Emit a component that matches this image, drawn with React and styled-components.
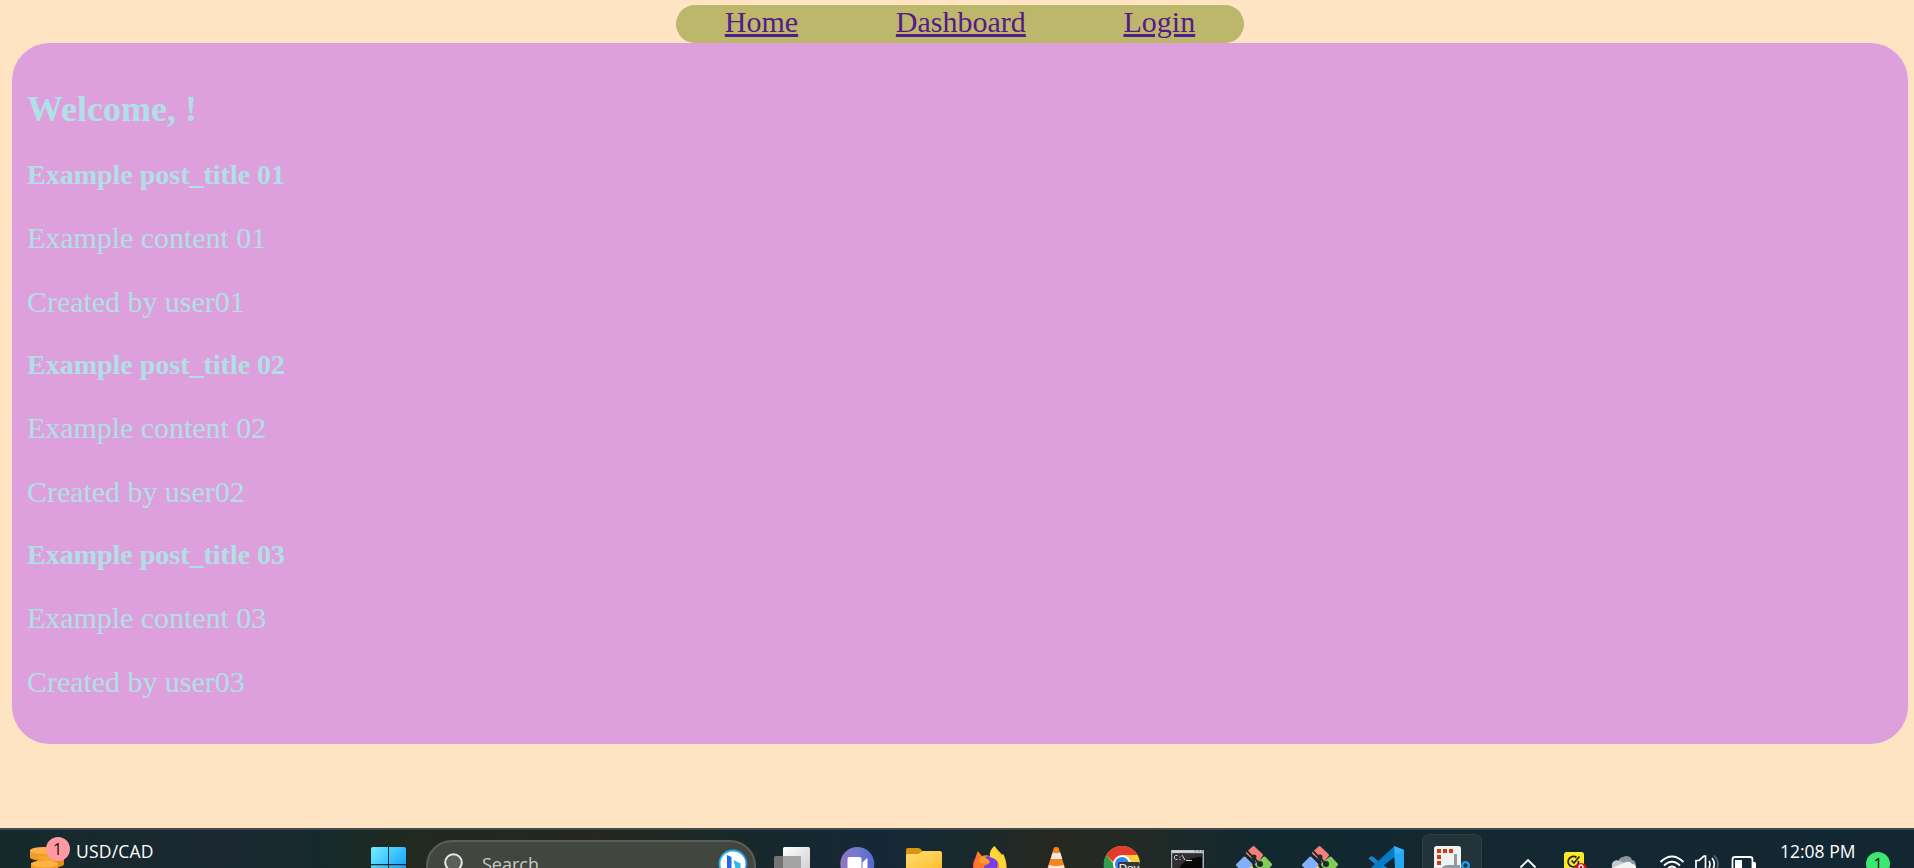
import React from 'react';
import styled, { createGlobalStyle } from 'styled-components';

const GlobalStyle = createGlobalStyle`
  * { box-sizing: border-box; }
  body {
    margin: 0;
    background: #ffe4c4;
    font-family: 'Liberation Serif', 'Times New Roman', serif;
    font-size: 30px;
  }
`;

const Screen = styled.div`
  display: flex;
  flex-direction: column;
  height: 868px;
  overflow: hidden;
`;

const Page = styled.div`
  flex: 1;
  padding: 5px 6px 0 12px;
`;

const Nav = styled.nav`
  display: flex;
  justify-content: space-around;
  width: 568px;
  height: 38px;
  margin: 0 auto;
  border-radius: 19px;
  background: #bdb76b;
`;

const NavLink = styled.a`
  color: #551a8b;
  line-height: 34px;
  text-decoration: underline;
  text-decoration-thickness: 3px;
  text-underline-offset: 2px;
`;

const Panel = styled.main`
  display: flow-root;
  height: 701px;
  padding: 15px;
  border-radius: 37.5px;
  background: #dda0dd;
  color: #b0e0e6;
`;

const Welcome = styled.h2`
  margin: 30.88px 0 28.88px;
  font-size: 36px;
  line-height: 41px;
`;

const PostTitle = styled.h3`
  margin: 28.08px 0;
  font-size: 28.08px;
  letter-spacing: -0.04px;
  line-height: 32px;
`;

const PostText = styled.p`
  margin: 30px 0;
  letter-spacing: -0.04px;
  line-height: 34px;
`;

const Taskbar = styled.footer`
  display: flex;
  flex: none;
  align-items: flex-start;
  height: 40px;
  overflow: hidden;
  border-top: 2px solid #3d4b50;
  background: linear-gradient(
    90deg,
    #152a2b 0, #1b2832 220px, #162a2c 320px, #22291f 410px, #26271f 600px,
    #18292a 740px, #142838 880px, #1a2a2a 980px, #262820 1050px, #222a26 1140px,
    #12282f 1260px, #132831 1500px, #132733 1914px
  );
  color: #fff;
  font-family: 'Open Sans', 'Noto Sans', sans-serif;
  font-size: 17.5px;
`;

const Widget = styled.div`
  display: flex;
  width: 328px;
  margin-left: 28px;
`;

const IconWithBadge = styled.div`
  position: relative;
  width: 48px;
  height: 38px;
`;

const Count = styled.span`
  display: block;
  width: 24px;
  height: 24px;
  border-radius: 50%;
  background: ${(p) => p.$color};
  color: #141414;
  font-size: 16px;
  line-height: 24px;
  text-align: center;
`;

const WidgetCount = styled(Count)`
  position: absolute;
  top: 7px;
  left: 17.5px;
`;

const Label = styled.span`
  margin-top: 9px;
  line-height: 24px;
  white-space: nowrap;
  letter-spacing: ${(p) => p.$spacing || '0'};
`;

const Icon = styled.svg`
  display: block;
  flex: none;
  width: ${(p) => p.$width}px;
  height: 38px;
`;

const SearchBox = styled.div`
  display: flex;
  flex: none;
  justify-content: space-between;
  width: 330px;
  height: 52px;
  margin: 10px 3px 0 4px;
  padding: 0 6px 0 16px;
  border: 2px solid #59605a;
  border-radius: 26px;
  background: #41463f;
`;

const SearchText = styled.span`
  flex: 1;
  margin: 10px 0 0 16px;
  color: #c9cbc8;
  font-size: 18px;
  line-height: 24px;
`;

const Apps = styled.div`
  display: flex;
  flex: none;
`;

const Tray = styled.div`
  display: flex;
  flex: 1;
  align-items: flex-start;
`;

const Clock = styled(Label)`
  width: 86px;
  margin-left: 16px;
`;

const TrayCount = styled(Count)`
  margin-top: 22px;
`;

const AppIcon = ({ children }) => (
  <Icon $width={66} viewBox="0 0 66 38">{children}</Icon>
);

const Coins = () => (
  <Icon $width={48} viewBox="0 0 48 38">
    <g fill="#f39a20">
      <path d="M2 20v7c0 5 27 5 27 0v-7z" />
      <path d="M9 27v7c0 5 27 5 27 0v-7z" fill="#e98d18" />
      <path d="M3 33v9h27v-9z" />
    </g>
    <ellipse cx="15.500" cy="20.500" rx="13.500" ry="3.500" fill="#ffb347" />
    <ellipse cx="22" cy="28" rx="13" ry="3" fill="#f9a332" />
    <ellipse cx="16.500" cy="34" rx="13.500" ry="3.500" fill="#ffb341" />
  </Icon>
);

const Windows = () => (
  <AppIcon>
    <defs>
      <linearGradient id="win" gradientUnits="userSpaceOnUse" x1="15" y1="17" x2="50" y2="52">
        <stop offset="0" stopColor="#75f1ff" />
        <stop offset=".5" stopColor="#35bdff" />
        <stop offset="1" stopColor="#0a86e8" />
      </linearGradient>
    </defs>
    <g fill="url(#win)">
      <path d="M15 19q0-2 2-2h15v17H15zM33 17h15q2 0 2 2v15H33zM15 35.200h17v4H15zM33 35.200h17v4H33z" />
    </g>
  </AppIcon>
);

const Magnifier = () => (
  <Icon $width={22} viewBox="0 0 22 38">
    <circle cx="9.500" cy="20.500" r="8.300" fill="#5a5f5a" stroke="#e8eae8" strokeWidth="2" />
    <path d="m15.500 27 6 6" stroke="#e8eae8" strokeWidth="2" />
  </Icon>
);

const Bing = () => (
  <Icon $width={30} viewBox="0 0 30 38">
    <defs>
      <linearGradient id="bingRing" x1="0" y1="0" x2="1" y2="1">
        <stop offset="0" stopColor="#22c5f4" />
        <stop offset="1" stopColor="#2276e8" />
      </linearGradient>
    </defs>
    <circle cx="15" cy="22" r="13.500" fill="#fff" stroke="url(#bingRing)" strokeWidth="1.800" />
    <path d="m9 13 4.500 2v17L9 29z" fill="#2468e8" />
    <path d="m15.500 18 7 3.500v6l-7 4-3-1 5-4z" fill="#2bbde6" />
  </Icon>
);

const TaskView = () => (
  <AppIcon>
    <defs>
      <linearGradient id="pane" x1="0" y1="0" x2="1" y2="1">
        <stop offset="0" stopColor="#fff" />
        <stop offset="1" stopColor="#ccc" />
      </linearGradient>
    </defs>
    <rect x="24" y="17" width="27" height="27" rx="1.500" fill="url(#pane)" />
    <rect x="15" y="26" width="27" height="27" rx="1.500" fill="#747474" />
    <path d="M24 26h16.500q1.500 0 1.500 1.500V40H24z" fill="#a4a4a4" />
  </AppIcon>
);

const Chat = () => (
  <AppIcon>
    <defs>
      <linearGradient id="chat" x1="0" y1="0" x2="1" y2="0">
        <stop offset="0" stopColor="#9175c0" />
        <stop offset=".5" stopColor="#7379cd" />
        <stop offset="1" stopColor="#5867cf" />
      </linearGradient>
    </defs>
    <circle cx="32.300" cy="34" r="17" fill="url(#chat)" />
    <rect x="22.500" y="27" width="14" height="16" rx="2" fill="#fff" />
    <path d="M37.500 32.500l4-4q1-.6 1 .5v14h-5z" fill="#fff" />
  </AppIcon>
);

const Folder = () => (
  <AppIcon>
    <defs>
      <linearGradient id="folder" x1="0" y1="0" x2="1" y2="1">
        <stop offset="0" stopColor="#ffdf76" />
        <stop offset="1" stopColor="#ffbd2c" />
      </linearGradient>
    </defs>
    <path d="M15 20q0-2 2-2h10q1.500 0 2.500 1l3 3-4 4H15z" fill="#d8960c" />
    <path d="M15 25.500q0-1.500 1.500-1.500h10q1 0 2-.8l2-1.500q1-.7 2-.7H49q2 0 2 2v17H15z" fill="url(#folder)" />
  </AppIcon>
);

const Firefox = () => (
  <AppIcon>
    <defs>
      <linearGradient id="foxBody" x1="0" y1="1" x2="1" y2="0">
        <stop offset="0" stopColor="#ff3658" />
        <stop offset=".5" stopColor="#ff9225" />
        <stop offset="1" stopColor="#fff44f" />
      </linearGradient>
    </defs>
    <g transform="translate(1.800 1)">
      <path d="M14 38c0-6 1-8 2.500-11l2.500-7 4 5c4-1 7-1 8 1l4.500-11 4.500 5 3.500 4 1-1c2 4 3.500 9 3.500 15z" fill="url(#foxBody)" />
      <circle cx="31" cy="33" r="8" fill="#783de8" />
      <path d="M15 38c0-5 1-8 3-10l4-2c3 0 8 5 9 5 0 2-3 3-6 4l1 5z" fill="#ff7926" />
      <path d="M22 26c4-1 6 2 9 4 0 2-3 2-6 3l-5-2z" fill="#ff9b28" />
      <path d="M31 26c0-5 1-8 4.500-11 1 5 4 7 7 10l1-2c2 4 4 9 4 15H40c1-7-2-10-9-12z" fill="#ffd738" />
    </g>
  </AppIcon>
);

const Cone = () => (
  <AppIcon>
    <path d="M31 17.500q2-1 4.500 0L42 38H24.500z" fill="#f5861b" />
    <path d="m29.700 22.500-2 6.500h11.600l-2-6.500q-3.800 1.500-7.600 0z" fill="#eceae8" />
    <path d="M26 35q7 2 14.500 0l1 3H25z" fill="#eceae8" />
  </AppIcon>
);

const DevBadge = styled.span`
  position: absolute;
  top: 32px;
  left: 29px;
  width: 22px;
  height: 14px;
  border-radius: 2px;
  background: #35383a;
  font-family: 'Liberation Sans', Arial, sans-serif;
  font-size: 11.5px;
  line-height: 12px;
  text-align: center;
`;

const Badged = styled.div`
  position: relative;
`;

const Chrome = () => (
  <Badged>
    <AppIcon>
      <circle cx="33" cy="34" r="18" fill="#ffcd3c" />
      <path d="M17.400 25A18 18 0 0 1 48.600 25H33l-5 11z" fill="#e33b2e" />
      <path d="M17.400 25A18 18 0 0 0 15 38h16l-5-2z" fill="#2f9d50" />
      <circle cx="33" cy="34" r="9" fill="#fff" />
      <circle cx="33" cy="34" r="7" fill="#3b83f2" />
    </AppIcon>
    <DevBadge>Dev</DevBadge>
  </Badged>
);

const Terminal = () => (
  <AppIcon>
    <path d="M16 20h33v20H16z" fill="#aab2b8" />
    <path d="M17 20.500h31v2H17z" fill="#d5dadd" />
    <path d="M17.500 23.500h30V40h-30z" fill="#080808" />
    <path d="M17.500 23.500h30v3c-12 1-20 5-23 11.500h-7z" fill="#303030" />
    <path d="M39.500 21h2M43 21h2M46 21h2" stroke="#61727e" />
    <path d="M22.500 25.500h-2l-1 1v2l1 1h2M25 26.500v1M25 29v1M27 25l3 5M31 30.500h6" fill="none" stroke="#d6d6d6" />
  </AppIcon>
);

const Git = () => (
  <AppIcon>
    <g strokeLinejoin="round" strokeWidth="3">
      <path d="M32.500 17.500l8 7.500-5 6-9-8z" fill="#f57f7b" stroke="#f57f7b" />
      <path d="M23.500 28l6.500 6.500-6 8-7.500-7.500z" fill="#82b0fa" stroke="#82b0fa" />
      <path d="M43.500 28l6 6.500-7 8-7-8z" fill="#80ce58" stroke="#80ce58" />
    </g>
    <path d="m26 21 7 7v10M33 28l6 6" stroke="#1d2a2b" strokeWidth="1.800" fill="none" />
    <circle cx="33" cy="27" r="2.500" fill="#1d2a2b" />
    <circle cx="39" cy="34" r="3" fill="#1d2a2b" />
    <path d="M28.500 38l2.500-2.500 1.500 2.500z" fill="#f8dc64" />
  </AppIcon>
);

const Code = () => (
  <AppIcon>
    <path d="M15.500 28.500l2-2q1-.7 2 0L42 44l-6 2z" fill="#1685d1" />
    <path d="M41 16.500 15.500 40l5 3L43 26z" fill="#087bc5" />
    <path d="m41 16 10 4v20H42z" fill="#25a9f2" />
    <path d="m41 16 10 4-8 4z" fill="#3db2f4" />
  </AppIcon>
);

const Snip = () => (
  <AppIcon>
    <rect x="3.500" y="4.500" width="59" height="58" rx="6" fill="#22343a" stroke="#2d3e45" />
    <rect x="15" y="16" width="27" height="30" rx="2.500" fill="#f0f1f4" />
    <path d="M18 19h4v4h-4zM24 19h4v4h-4zM30 19h4v4h-4zM18 25h4v4h-4zM18 31h4v4h-4z" fill="#d83b05" />
    <path d="M36.500 24v12M24 38.500q2-2 5-2h12" fill="none" stroke="#9298a0" strokeWidth="3" />
    <circle cx="46.500" cy="35.500" r="3.300" fill="none" stroke="#249ee8" strokeWidth="2.300" />
  </AppIcon>
);

const TrayIcons = () => (
  <>
    <Icon $width={66} viewBox="0 0 66 38">
      <path d="m35.500 37.500 7.500-7.500 7.500 7.500" fill="none" stroke="#fff" strokeWidth="1.900" />
    </Icon>
    <Icon $width={46} viewBox="0 0 46 38">
      <rect x="13" y="22" width="20" height="20" rx="2.500" fill="#fdea24" />
      <path d="M25.500 27.500A5.200 5.200 0 1 0 27.500 31M20.500 30.500l2.500 2.500 5.500-6.500" fill="none" stroke="#222" strokeWidth="1.700" />
      <circle cx="30" cy="39" r="6" fill="#dc101b" />
      <path d="M28 38q0-3 2-3t2 3" fill="none" stroke="#fff" strokeWidth="1.300" />
    </Icon>
    <Icon $width={53} viewBox="0 0 53 38">
      <path d="M22 32c-1-3 2-5 4-5 3-2 8-1 9 3 3 0 4 3 4 8H15c-1-4 2-7 7-6z" fill="#8d959a" />
      <path d="M15 36c-1-4 4-7 8-5l9 4 7 1v3H15z" fill="#c3c8ca" />
      <path d="M15 38l14-6q5-1 6 2 4 0 4 4z" fill="#f2f3f3" />
    </Icon>
    <Icon $width={42} viewBox="0 0 42 38">
      <g fill="none" stroke="#fff" strokeWidth="1.800">
        <path d="M10.500 32q11.500-11 23 0M14 35.500q8-7.500 16 0M18 38.500q4-4 8 0" />
      </g>
    </Icon>
    <Icon $width={36} viewBox="0 0 36 38">
      <g fill="none" stroke="#fff" strokeWidth="1.700">
        <path d="M13.500 40v-14h-1.500l-5 4.500H4v9M17 31q2 3 0 7M20 28q4 5 1 11" />
        <path d="M22 25.500q6 6 3 13" opacity=".3" />
      </g>
    </Icon>
    <Icon $width={36} viewBox="0 0 36 38">
      <path d="M4.500 40V29.500q0-2.500 2.500-2.500h15q2.500 0 2.500 2.500V40" fill="none" stroke="#fff" strokeWidth="1.800" />
      <path d="M7 30h7v9H7zM25 32h2q1 0 1 1.500V38h-3z" fill="#fff" />
    </Icon>
  </>
);

const posts = ['01', '02', '03'];

export default function App() {
  return (
    <Screen>
      <GlobalStyle />
      <Page>
        <Nav>
          <NavLink href="#home">Home</NavLink>
          <NavLink href="#dashboard">Dashboard</NavLink>
          <NavLink href="#login">Login</NavLink>
        </Nav>
        <Panel>
          <Welcome>Welcome, !</Welcome>
          {posts.map((id) => (
            <React.Fragment key={id}>
              <PostTitle>Example post_title {id}</PostTitle>
              <PostText>Example content {id}</PostText>
              <PostText>Created by user{id}</PostText>
            </React.Fragment>
          ))}
        </Panel>
      </Page>
      <Taskbar>
        <Widget>
          <IconWithBadge>
            <Coins />
            <WidgetCount $color="#ff99a4">1</WidgetCount>
          </IconWithBadge>
          <Label $spacing="0.2px">USD/CAD</Label>
        </Widget>
        <Windows />
        <SearchBox>
          <Magnifier />
          <SearchText>Search</SearchText>
          <Bing />
        </SearchBox>
        <Apps>
          <TaskView />
          <Chat />
          <Folder />
          <Firefox />
          <Cone />
          <Chrome />
          <Terminal />
          <Git />
          <Git />
          <Code />
          <Snip />
        </Apps>
        <Tray>
          <TrayIcons />
          <Clock>12:08 PM</Clock>
          <TrayCount $color="#3ce870">1</TrayCount>
        </Tray>
      </Taskbar>
    </Screen>
  );
}
